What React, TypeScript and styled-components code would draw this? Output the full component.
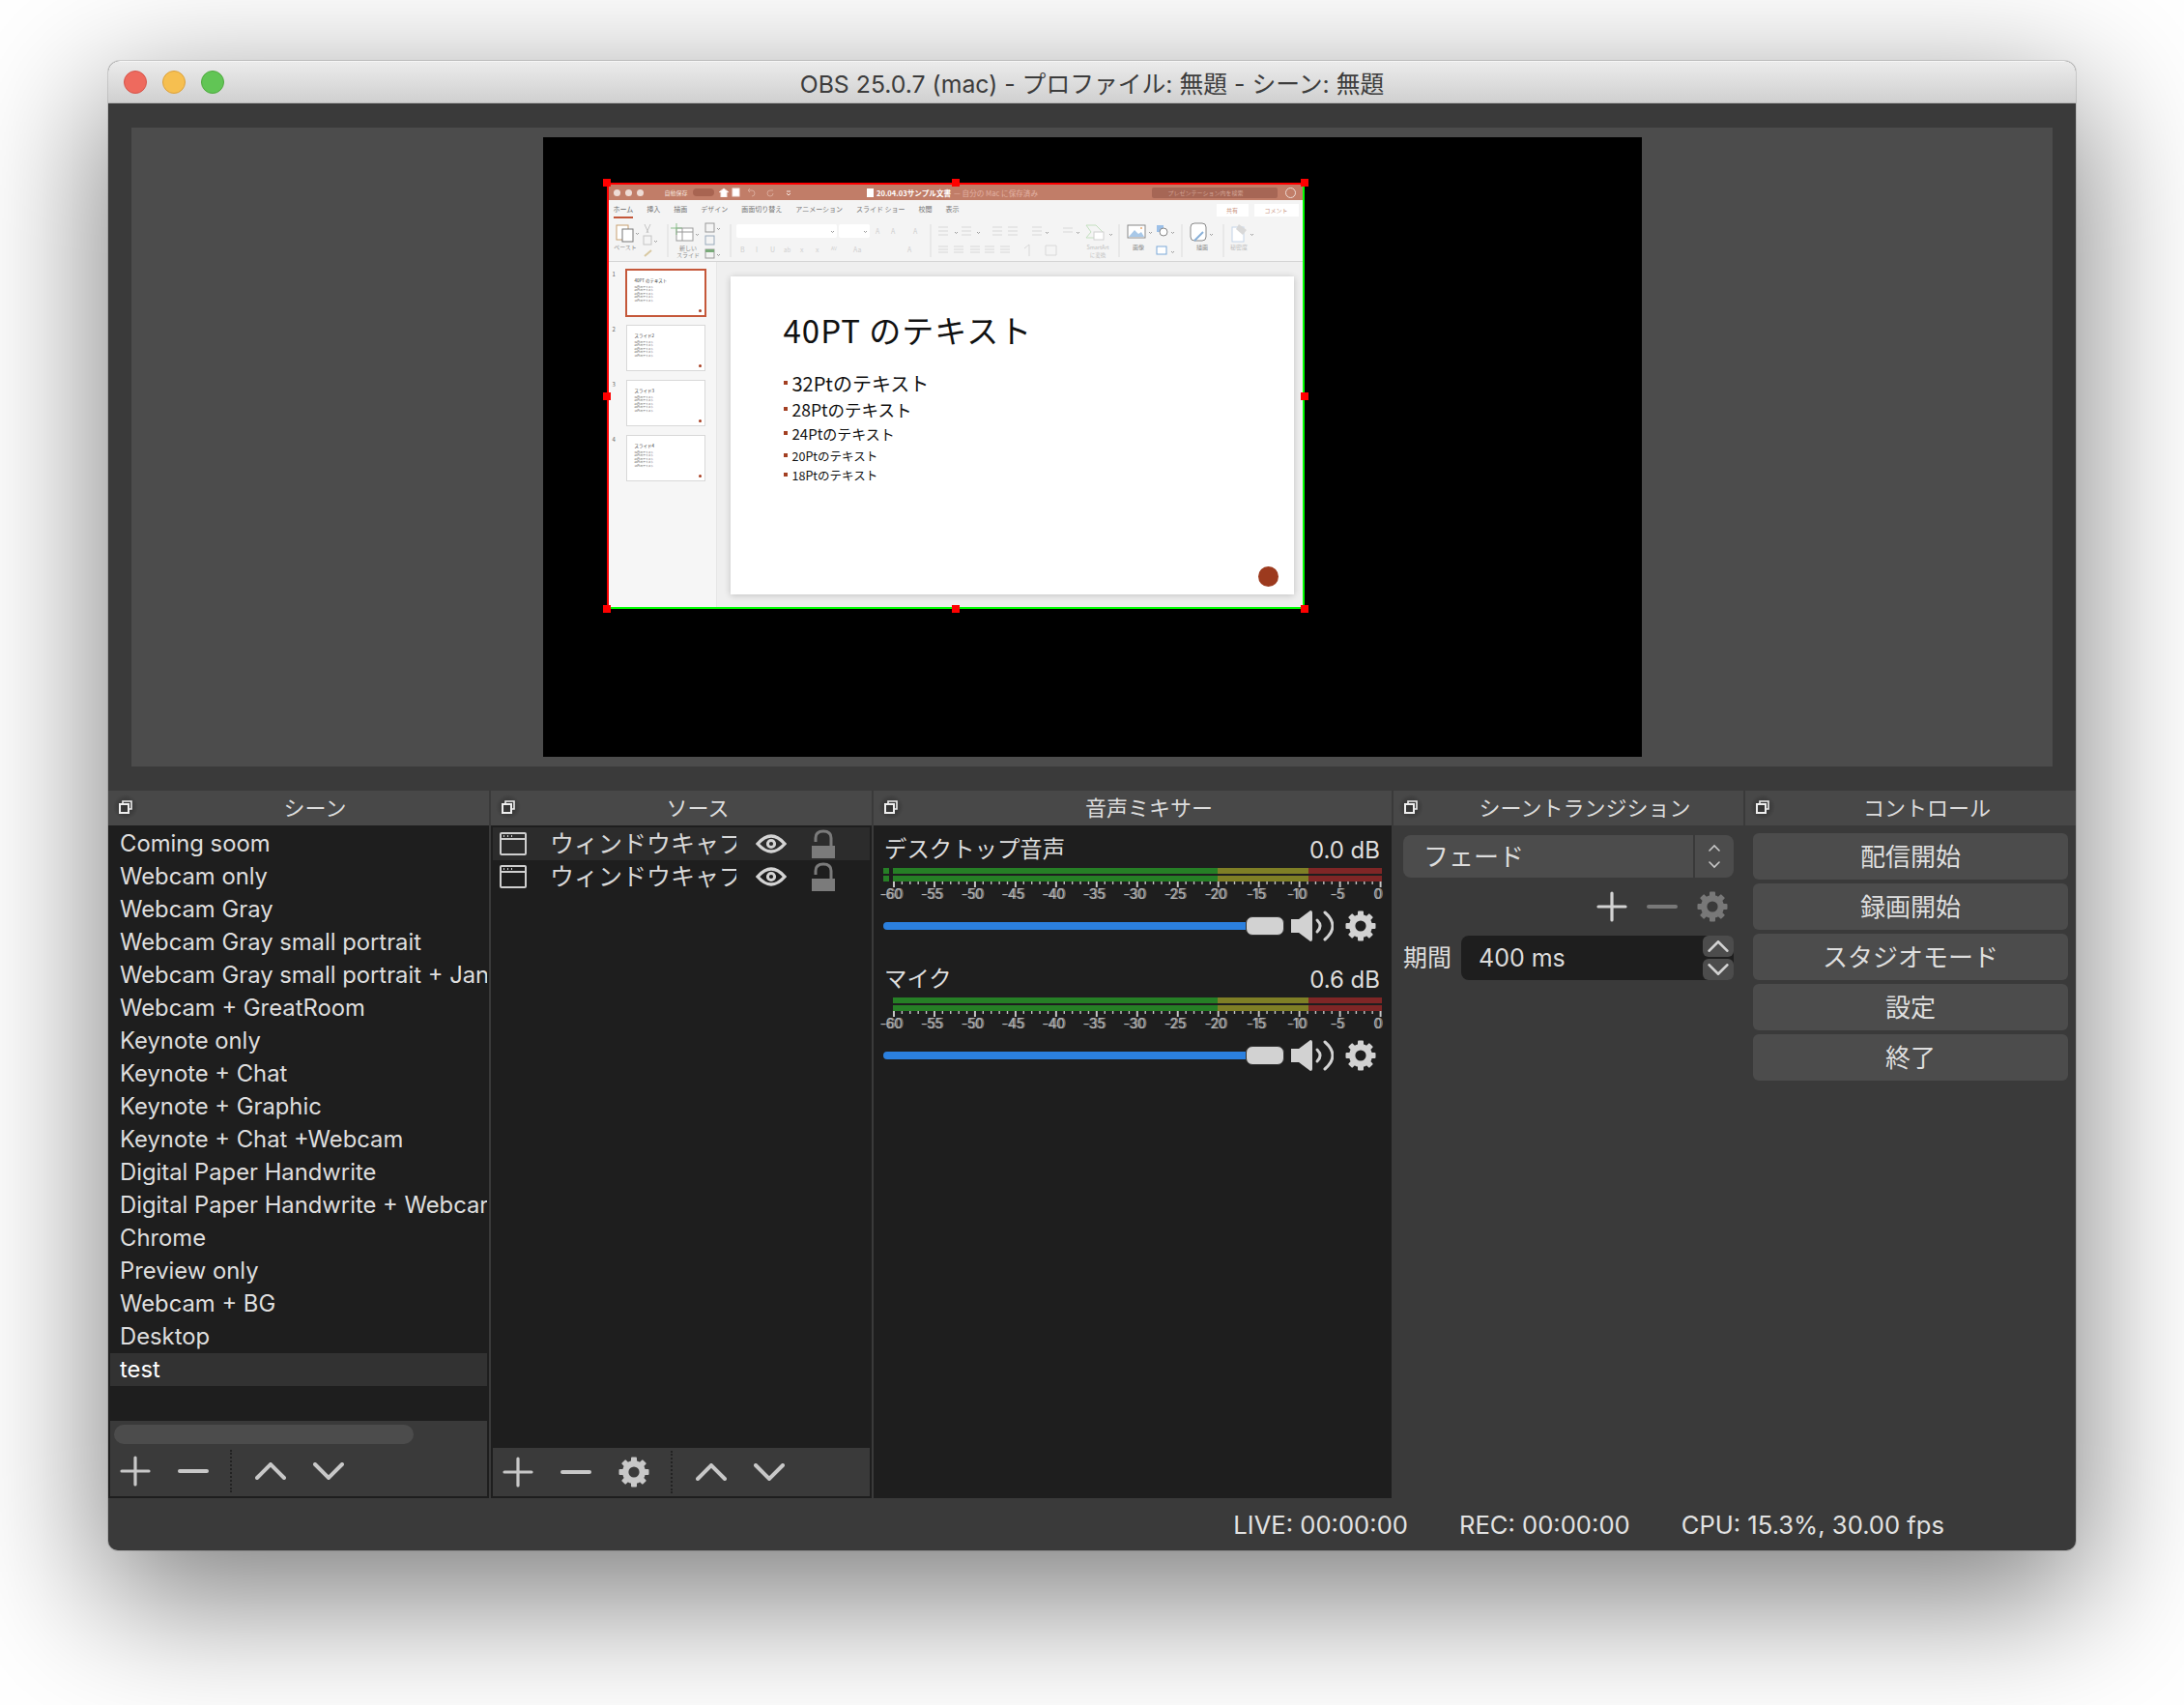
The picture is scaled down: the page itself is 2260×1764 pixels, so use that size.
import React from 'react';
import styled, { createGlobalStyle } from 'styled-components';

const UI_FONT = `Inter, "Noto Sans CJK JP", "Noto Sans", sans-serif`;
const JP_FONT = `"Noto Sans CJK JP", "Noto Sans", sans-serif`;

const scenes = [
  'Coming soom',
  'Webcam only',
  'Webcam Gray',
  'Webcam Gray small portrait',
  'Webcam Gray small portrait + Jan',
  'Webcam + GreatRoom',
  'Keynote only',
  'Keynote + Chat',
  'Keynote + Graphic',
  'Keynote + Chat +Webcam',
  'Digital Paper Handwrite',
  'Digital Paper Handwrite + Webcar',
  'Chrome',
  'Preview only',
  'Webcam + BG',
  'Desktop',
  'test',
];

const bullets = [
  { text: '32Ptのテキスト', size: 20, h: 26 },
  { text: '28Ptのテキスト', size: 17.5, h: 28 },
  { text: '24Ptのテキスト', size: 15, h: 22 },
  { text: '20Ptのテキスト', size: 12.5, h: 24 },
  { text: '18Ptのテキスト', size: 12.5, h: 16 },
];

const thumbs = ['40PT のテキスト', 'スライド2', 'スライド3', 'スライド4'];
const tabs = ['ホーム', '挿入', '描画', 'デザイン', '画面切り替え', 'アニメーション', 'スライド ショー', '校閲', '表示'];
const controls = ['配信開始', '録画開始', 'スタジオモード', '設定', '終了'];
const dbLabels = ['-60', '-55', '-50', '-45', '-40', '-35', '-30', '-25', '-20', '-15', '-10', '-5', '0'];

const Page = createGlobalStyle`
  html, body {
    margin: 0;
    background: #fff;
  }
  body {
    width: 2260px;
    height: 1764px;
    overflow: hidden;
    font-family: ${UI_FONT};
  }
`;

const Desk = styled.div`
  padding: 63px 0 0 112px;
`;

const Window = styled.div`
  width: 2036px;
  height: 1541px;
  display: flex;
  flex-direction: column;
  background: #3a3a3a;
  border-radius: 12px 12px 10px 10px;
  box-shadow: 0 44px 140px 8px rgba(0, 0, 0, 0.5), 0 0 0 1px rgba(0, 0, 0, 0.12);
  overflow: hidden;
`;

const TitleBar = styled.div`
  height: 44px;
  box-sizing: border-box;
  display: grid;
  grid-template-columns: 1fr auto 1fr;
  align-items: center;
  background: linear-gradient(#ebebeb, #d0d0d0);
  border-top: 1px solid #f5f5f5;
  border-bottom: 1px solid #b4b4b4;
`;

const Lights = styled.div`
  display: flex;
  gap: 16px;
  padding-left: 16px;
`;

const Light = styled.span<{ $fill: string; $edge: string }>`
  width: 24px;
  height: 24px;
  box-sizing: border-box;
  border-radius: 50%;
  background: ${(p) => p.$fill};
  border: 1px solid ${(p) => p.$edge};
`;

const WindowTitle = styled.div`
  font-size: 24.8px;
  color: #3c3c3c;
  white-space: nowrap;
`;

const PreviewWrap = styled.div`
  padding: 25px 24px;
`;

const Preview = styled.div`
  height: 661px;
  background: #4c4c4c;
  display: flex;
  justify-content: center;
  align-items: center;
`;

const Stage = styled.div`
  position: relative;
  width: 1137px;
  height: 641px;
  background: #000;
`;

const Capture = styled.div`
  position: absolute;
  left: 66px;
  top: 47px;
  width: 722px;
  height: 441px;
  box-sizing: border-box;
  border-style: solid;
  border-width: 2px;
  border-color: #f00 #0f0 #0f0 #f00;
  display: flex;
  flex-direction: column;
  background: #f4f4f4;
  font-family: ${JP_FONT};
`;

const Handle = styled.span<{ $x: string; $y: string }>`
  position: absolute;
  width: 8px;
  height: 8px;
  background: #f00;
  left: ${(p) => p.$x};
  top: ${(p) => p.$y};
  margin: -4px 0 0 -4px;
`;

const PptTitle = styled.div`
  height: 16px;
  flex: none;
  display: grid;
  grid-template-columns: 1fr auto 1fr;
  align-items: center;
  background: #c17d68;
  color: #fff;
  font-size: 7.6px;
`;

const PptLeft = styled.div`
  display: flex;
  align-items: center;
  padding-left: 5px;
  gap: 5px;
`;

const PptDot = styled.span`
  width: 7px;
  height: 7px;
  border-radius: 50%;
  background: #eedcd6;
`;

const AutoSave = styled.span`
  font-size: 6px;
  margin-left: 17px;
  color: #f3e0da;
  white-space: nowrap;
`;

const Toggle = styled.span`
  width: 22px;
  height: 8px;
  border-radius: 4px;
  background: #a86451;
  margin-right: 0;
`;

const PptName = styled.div`
  display: flex;
  align-items: center;
  gap: 3px;
  white-space: nowrap;
  margin-left: -6px;
`;

const PptFile = styled.span`
  font-weight: 700;
`;

const PptSaved = styled.span`
  color: #e2b2a4;
`;

const PptRight = styled.div`
  display: flex;
  align-items: center;
  justify-content: flex-end;
  padding-right: 7px;
  gap: 8px;
`;

const PptSearch = styled.div`
  width: 130px;
  height: 11px;
  border-radius: 2px;
  background: #a66655;
  color: #d3a597;
  font-size: 6px;
  line-height: 11px;
  padding-left: 17px;
  box-sizing: border-box;
  white-space: nowrap;
`;

const PptSmile = styled.span`
  width: 9px;
  height: 9px;
  border-radius: 50%;
  border: 1px solid #eedcd6;
`;

const TabRow = styled.div`
  height: 20px;
  flex: none;
  display: flex;
  align-items: center;
  gap: 14px;
  padding: 0 4px 0 5px;
  font-size: 7px;
  color: #7c7c7c;
  white-space: nowrap;
`;

const Tab = styled.span<{ $active?: boolean }>`
  height: 18px;
  line-height: 17px;
  box-sizing: border-box;
  color: ${(p) => (p.$active ? '#666' : '#777')};
  border-bottom: ${(p) => (p.$active ? '2px solid #c4573a' : '0')};
`;

const TabSpacer = styled.span`
  flex: 1;
`;

const ShareButton = styled.span<{ $w: number }>`
  width: ${(p) => p.$w}px;
  height: 13px;
  margin-left: -8px;
  background: #fff;
  color: #c9937f;
  font-size: 6px;
  line-height: 13px;
  text-align: center;
`;

const RibbonSvg = styled.svg`
  display: block;
  width: 718px;
  height: 43px;
  flex: none;
  border-bottom: 1px solid #d4d4d4;
  font-family: ${JP_FONT};
`;

const PptBody = styled.div`
  flex: 1;
  min-height: 0;
  display: flex;
`;

const PptSide = styled.div`
  width: 112px;
  flex: none;
  box-sizing: border-box;
  padding: 8px 0 0 4px;
  background: #f6f6f6;
  border-right: 1px solid #e6e6e6;
  display: flex;
  flex-direction: column;
  gap: 9px;
`;

const ThumbRow = styled.div`
  display: flex;
  gap: 10px;
  font-size: 6px;
  color: #666;
`;

const ThumbNo = styled.span`
  width: 4px;
`;

const Thumb = styled.div<{ $active: boolean }>`
  width: ${(p) => (p.$active ? 84 : 82)}px;
  height: ${(p) => (p.$active ? 50 : 48)}px;
  margin: ${(p) => (p.$active ? '-1px' : '0')};
  box-sizing: border-box;
  padding: 7px 0 0 8px;
  background: #fff;
  border: ${(p) => (p.$active ? '2px solid #c5583a' : '1px solid #d8d8d8')};
  color: #333;
  position: relative;
`;

const ThumbHead = styled.div`
  font-size: 4.5px;
  line-height: 6px;
  margin-bottom: 3px;
  white-space: nowrap;
`;

const ThumbLine = styled.div`
  font-size: 2.8px;
  line-height: 3.4px;
  color: #555;
  white-space: nowrap;
`;

const ThumbDot = styled.span`
  position: absolute;
  right: 3px;
  bottom: 3px;
  width: 3px;
  height: 3px;
  border-radius: 50%;
  background: #a93f22;
`;

const PptCanvas = styled.div`
  flex: 1;
  display: flex;
  box-sizing: border-box;
  padding: 15px 9px 13px 14px;
  background: #efefef;
`;

const Slide = styled.div`
  flex: 1;
  position: relative;
  box-sizing: border-box;
  padding: 32px 0 0 55px;
  background: #fff;
  box-shadow: 0 1px 7px rgba(0, 0, 0, 0.2);
  color: #111;
`;

const SlideTitle = styled.div`
  font-size: 33px;
  line-height: 46px;
  letter-spacing: 1px;
  margin-bottom: 19px;
  white-space: nowrap;
`;

const Bullet = styled.div<{ $size: number; $h: number }>`
  height: ${(p) => p.$h}px;
  display: flex;
  align-items: center;
  font-size: ${(p) => p.$size}px;
  white-space: nowrap;
`;

const BulletMark = styled.span`
  width: 4px;
  height: 4px;
  margin-right: 5px;
  background: #a33f22;
`;

const Seal = styled.span`
  position: absolute;
  right: 16px;
  bottom: 8px;
  width: 21px;
  height: 21px;
  border-radius: 50%;
  background: #9c3a1e;
`;

const Docks = styled.div`
  height: 732px;
  flex: none;
  display: grid;
  grid-template-columns: 394px 394px 536px 362px 342px;
  gap: 2px;
`;

const Dock = styled.section<{ $dark?: boolean }>`
  display: flex;
  flex-direction: column;
  min-width: 0;
  background: ${(p) => (p.$dark ? '#1e1e1e' : '#3a3a3a')};
`;

const DockHead = styled.header`
  height: 36px;
  flex: none;
  display: flex;
  align-items: center;
  background: #484848;
  color: #dcdcdc;
  font-size: 22px;
  font-family: ${JP_FONT};
`;

const FloatBtn = styled.span`
  width: 34px;
  height: 36px;
  flex: none;
  box-sizing: border-box;
  padding: 0 0 2px 2px;
  display: flex;
  align-items: center;
  justify-content: center;
  background: radial-gradient(circle at 53% 47%, #333 0, #3c3c3c 8px, #484848 13px);
`;

const DockTitle = styled.span`
  flex: 1;
  text-align: center;
  padding-bottom: 4px;
`;

const ListArea = styled.div`
  flex: 1;
  min-height: 0;
  padding: 2px 2px 0;
  overflow: hidden;
`;

const SceneRow = styled.div<{ $active?: boolean }>`
  height: 34px;
  line-height: 34px;
  padding-left: 10px;
  font-size: 23.8px;
  white-space: nowrap;
  overflow: hidden;
  color: ${(p) => (p.$active ? '#fff' : '#dedede')};
  background: ${(p) => (p.$active ? '#323232' : 'transparent')};
`;

const SourceRow = styled.div<{ $active?: boolean }>`
  height: 34px;
  display: flex;
  align-items: center;
  padding-left: 7px;
  color: #d8d8d8;
  background: ${(p) => (p.$active ? '#2c2c2c' : 'transparent')};
`;

const SourceName = styled.span`
  width: 193px;
  margin-left: 24px;
  padding-bottom: 4px;
  flex: none;
  overflow: hidden;
  white-space: nowrap;
  font-size: 25px;
  font-family: ${JP_FONT};
`;

const EyeSlot = styled.span`
  margin: 0 26px 0 20px;
  display: flex;
`;

const Scrollbar = styled.div`
  height: 24px;
  flex: none;
  box-sizing: border-box;
  margin: 0 2px;
  padding: 4px 0 0 4px;
  background: #3a3a3a;
`;

const ScrollThumb = styled.div`
  width: 310px;
  height: 20px;
  border-radius: 10px;
  background: #4c4c4c;
`;

const Toolbar = styled.div<{ $tall?: boolean }>`
  height: ${(p) => (p.$tall ? 54 : 50)}px;
  flex: none;
  box-sizing: border-box;
  margin: 0 2px 2px;
  padding-top: ${(p) => (p.$tall ? 2 : 0)}px;
  display: flex;
  align-items: center;
  background: #3a3a3a;
  color: #c8c8c8;
`;

const ToolGroup = styled.div`
  display: flex;
  gap: 8px;
`;

const ToolBtn = styled.span`
  width: 52px;
  display: flex;
  justify-content: center;
  align-items: center;
`;

const ToolSep = styled.span`
  width: 1px;
  height: 44px;
  margin: 0 13px 0 12px;
  border-left: 2px dotted #222;
`;

const Strip = styled.div`
  height: 134px;
  flex: none;
  box-sizing: border-box;
  padding: 10px 10px 0;
  color: #dedede;
`;

const StripHead = styled.div`
  height: 30px;
  display: flex;
  align-items: center;
  justify-content: space-between;
  font-size: 24px;
  padding: 0 2px 0 1px;
`;

const StripName = styled.span`
  font-size: 23.4px;
  font-family: ${JP_FONT};
  padding-bottom: 4px;
`;

const MeterStack = styled.div`
  margin-top: 4px;
  display: flex;
  flex-direction: column;
  gap: 2px;
`;

const MeterBar = styled.div<{ $lead: boolean }>`
  height: 6px;
  display: flex;
  padding-left: ${(p) => (p.$lead ? 0 : 10)}px;
`;

const MeterSeg = styled.span<{ $w: number; $c: string; $gap?: number }>`
  width: ${(p) => p.$w}px;
  margin-right: ${(p) => p.$gap ?? 0}px;
  background: ${(p) => p.$c};
`;

const TickSvg = styled.svg`
  display: block;
  width: 516px;
  height: 6px;
`;

const TickLabels = styled.div`
  display: flex;
  margin-left: -13px;
  height: 14px;
`;

const TickLabel = styled.span`
  width: 41.97px;
  flex: none;
  text-align: center;
  font-size: 14px;
  line-height: 14px;
  letter-spacing: -0.3px;
  color: #b4b4b4;
  text-shadow: 1.5px 0 0 rgba(160, 160, 160, 0.75);
`;

const SliderRow = styled.div`
  height: 32px;
  margin-top: 10px;
  display: flex;
  align-items: center;
  color: #d2d2d2;
`;

const Track = styled.div`
  width: 375px;
  height: 8px;
  flex: none;
  border-radius: 4px 0 0 4px;
  background: #2b80df;
`;

const Knob = styled.div`
  width: 40px;
  height: 20px;
  flex: none;
  box-sizing: border-box;
  border: 1px solid #333;
  border-radius: 7px;
  background: #d2d2d2;
  margin-right: 7px;
`;

const SliderGear = styled.span`
  margin-left: 12px;
  display: flex;
`;

const Pane = styled.div`
  padding: 10px 10px 0;
  color: #dcdcdc;
`;

const Combo = styled.div`
  height: 44px;
  display: flex;
  align-items: center;
  background: #4c4c4c;
  border-radius: 8px;
  font-size: 26px;
  font-family: ${JP_FONT};
`;

const ComboText = styled.span`
  flex: 1;
  padding: 0 0 4px 21px;
`;

const ComboArrows = styled.span`
  width: 40px;
  height: 44px;
  flex: none;
  display: flex;
  align-items: center;
  justify-content: center;
  border-left: 2px solid #3a3a3a;
`;

const TransTools = styled.div`
  height: 36px;
  margin-top: 12px;
  display: flex;
  justify-content: flex-end;
  align-items: center;
  gap: 20px;
  padding-right: 6px;
`;

const ToolGlyph = styled.span<{ $dim?: boolean }>`
  display: flex;
  color: ${(p) => (p.$dim ? '#787878' : '#d2d2d2')};
`;

const DurationRow = styled.div`
  height: 46px;
  margin-top: 12px;
  display: flex;
  align-items: center;
`;

const DurationLabel = styled.span`
  width: 60px;
  flex: none;
  padding-bottom: 4px;
  font-size: 25px;
  font-family: ${JP_FONT};
  white-space: nowrap;
`;

const DurationBox = styled.div`
  flex: 1;
  height: 46px;
  position: relative;
  box-sizing: border-box;
  padding-left: 18px;
  line-height: 46px;
  font-size: 25px;
  background: #1e1e1e;
  border-radius: 8px;
`;

const Spin = styled.div`
  position: absolute;
  right: 0;
  top: 0;
  width: 32px;
  display: flex;
  flex-direction: column;
  gap: 2px;
`;

const SpinBtn = styled.span`
  height: 22px;
  display: flex;
  align-items: center;
  justify-content: center;
  background: #4c4c4c;
  border-radius: 6px;
  color: #d2d2d2;
`;

const ControlStack = styled.div`
  padding: 8px 8px 0;
  display: flex;
  flex-direction: column;
  gap: 4px;
`;

const ControlButton = styled.button`
  height: 48px;
  padding: 0 0 4px;
  border: 0;
  border-radius: 6px;
  background: #4c4c4c;
  color: #dedede;
  font-size: 26px;
  font-family: ${JP_FONT};
`;

const StatusBar = styled.footer`
  height: 54px;
  flex: none;
  box-sizing: border-box;
  padding: 1px 136px 0 0;
  display: flex;
  justify-content: flex-end;
  align-items: center;
  gap: 53px;
  color: #e2e2e2;
  font-size: 25.6px;
`;

const FloatIcon = () => (
  <svg width="14" height="14" viewBox="0 0 14 14" fill="none" stroke="#eee" strokeWidth="2">
    <path d="M4 3V1h9v8h-3" strokeWidth="1.6" />
    <rect x="1" y="4" width="9" height="9" />
  </svg>
);

const Plus = ({ size = 32 }: { size?: number }) => (
  <svg width={size} height={size} viewBox="0 0 32 32" stroke="currentColor" strokeWidth="3.2" strokeLinecap="round">
    <path d="M16 2v28M2 16h28" />
  </svg>
);

const Minus = () => (
  <svg width="32" height="32" viewBox="0 0 32 32" stroke="currentColor" strokeWidth="4" strokeLinecap="round">
    <path d="M2 16h28" />
  </svg>
);

const Chevron = ({ up, w = 32, h = 18, sw = 4 }: { up?: boolean; w?: number; h?: number; sw?: number }) => (
  <svg width={w} height={h} viewBox="0 0 32 18" fill="none" stroke="currentColor" strokeWidth={sw} strokeLinecap="round">
    <path d={up ? 'M2 16 16 2l14 14' : 'M2 2l14 14L30 2'} />
  </svg>
);

const teeth = [0, 45, 90, 135, 180, 225, 270, 315];

const Gear = ({ size = 32 }: { size?: number }) => (
  <svg width={size} height={size} viewBox="0 0 32 32" fill="currentColor">
    <circle cx="16" cy="16" r="8.8" fill="none" stroke="currentColor" strokeWidth="6.4" />
    {teeth.map((a) => (
      <rect key={a} x="13" y="0.5" width="6" height="6" rx="1" transform={`rotate(${a} 16 16)`} />
    ))}
  </svg>
);

const Speaker = () => (
  <svg width="44" height="32" viewBox="0 0 44 32" fill="none" stroke="currentColor">
    <path d="M0 9h8L20 0q2 0 2 2v28q0 2-2 2L8 23H0Z" fill="currentColor" stroke="none" />
    <path d="M27 10q6 6 0 12" strokeWidth="3" strokeLinecap="round" />
    <path d="M35 2q16 14 0 28" strokeWidth="3" strokeLinecap="round" />
  </svg>
);

const WindowIcon = () => (
  <svg width="28" height="24" viewBox="0 0 28 24" fill="none" stroke="#cfcfcf" strokeWidth="2">
    <rect x="1" y="1" width="26" height="22" rx="1" />
    <path d="M1 7h26" />
    <path d="M4 4h1M8 4h1M12 4h1" strokeWidth="2" />
  </svg>
);

const Eye = () => (
  <svg width="32" height="20" viewBox="0 0 32 20" fill="none" stroke="#d4d4d4">
    <path d="M2 10Q16-6 30 10 16 26 2 10Z" strokeWidth="3.4" />
    <circle cx="16" cy="10" r="3.6" strokeWidth="3" />
  </svg>
);

const Lock = () => (
  <svg width="24" height="30" viewBox="0 0 24 30" fill="none">
    <rect y="17" width="24" height="13" fill="#7b7b7b" />
    <path d="M4 13V9q0-7 8-7t8 7v9" stroke="#7b7b7b" strokeWidth="3" />
  </svg>
);

const Updown = () => (
  <svg width="14" height="26" viewBox="0 0 14 26" fill="none" stroke="#c8c8c8" strokeWidth="1.6" strokeLinecap="round">
    <path d="M2 7l5-5 5 5M2 19l5 5 5-5" />
  </svg>
);

const Ticks = () => {
  const lines = [];
  for (let i = 0; i <= 60; i++) {
    const major = i % 5 === 0;
    const x = 11 + i * 8.393;
    lines.push(<line key={i} x1={x} x2={x} y1="0" y2={major ? 6 : 3} strokeWidth={major ? 2 : 1.4} />);
  }
  return (
    <TickSvg viewBox="0 0 516 6" stroke="#c4c4c4">
      {lines}
    </TickSvg>
  );
};

const mutedText = { fill: '#8c8c8c', fontSize: 6 };

// the greyed-out PowerPoint ribbon inside the captured window
const Ribbon = () => (
  <RibbonSvg viewBox="0 0 718 43">
    <g stroke="#dcdcdc" strokeWidth="1">
      <path d="M61 5v34M126 5v34M333 5v34M528 5v34M593 5v34M636 5v34" />
    </g>
    <rect x="132" y="5" width="104" height="14" rx="2" fill="#fff" />
    <rect x="238" y="5" width="32" height="14" rx="2" fill="#fff" />
    <rect x="8" y="6" width="12" height="15" fill="#fff" stroke="#c8a070" />
    <rect x="14" y="10" width="11" height="13" fill="#fff" stroke="#777" />
    <g fill="none" stroke="#c4c4c4">
      <path d="M37 5l4 9M43 5l-4 9" />
      <rect x="36" y="17" width="8" height="9" />
      <path d="M37 38l7-6" strokeWidth="2" stroke="#d8c8a0" />
      <rect x="100" y="4" width="9" height="9" stroke="#999" />
      <rect x="100" y="17" width="9" height="9" stroke="#9ab" />
      <rect x="100" y="31" width="9" height="9" stroke="#999" />
    </g>
    <rect x="100" y="31" width="9" height="3" fill="#7aaa7a" />
    <rect x="70" y="9" width="17" height="13" fill="#fff" stroke="#999" />
    <path d="M70 4v12M64 9h12" stroke="#8ac08a" />
    <path d="M76 9v13M70 13h17" stroke="#999" />
    <text x="17" y="31" textAnchor="middle" {...mutedText}>ペースト</text>
    <text x="82" y="32" textAnchor="middle" {...mutedText}>新しい</text>
    <text x="82" y="39" textAnchor="middle" {...mutedText}>スライド</text>
    <g fill="#cfcfcf" fontSize="7">
      <text x="136" y="34">B</text>
      <text x="152" y="34">I</text>
      <text x="167" y="34">U</text>
      <text x="181" y="34" fontSize="6">ab</text>
      <text x="198" y="34">x</text>
      <text x="214" y="34">x</text>
      <text x="230" y="32" fontSize="5">AV</text>
      <text x="253" y="34">Aa</text>
      <text x="309" y="34">A</text>
      <text x="276" y="15">A</text>
      <text x="292" y="15">A</text>
      <text x="315" y="15">A</text>
    </g>
    <g stroke="#d8d8d8" fill="none">
      <path d="M341 8h10M341 12h10M341 16h10M365 8h10M365 12h10M365 16h10M397 8h10M397 12h10M397 16h10M413 8h10M413 12h10M413 16h10M438 8h10M438 12h10M438 16h10M470 9h10M470 13h10" />
      <path d="M341 28h10M341 31h10M341 34h10M357 28h10M357 31h10M357 34h10M374 28h10M374 31h10M374 34h10M389 28h10M389 31h10M389 34h10M405 28h10M405 31h10M405 34h10" />
      <path d="M435 26v12M430 30l5-4M452 27h11v10h-11z" />
      <path d="M494 6h10l8 8-8 5h-10l5-6z" stroke="#c4e0c0" />
      <rect x="502" y="13" width="10" height="8" stroke="#d0d0d0" fill="#fff" />
    </g>
    <text x="506" y="31" textAnchor="middle" fill="#c0c0c0" fontSize="5.5">SmartArt</text>
    <text x="506" y="39" textAnchor="middle" fill="#c0c0c0" fontSize="5.5">に変換</text>
    <rect x="537" y="6" width="18" height="13" fill="#fff" stroke="#888" />
    <path d="M538 18l6-7 4 4 3-2 3 5z" fill="#a8c8e8" />
    <circle cx="551" cy="9" r="1" fill="#e8a870" />
    <text x="548" y="31" textAnchor="middle" {...mutedText}>画像</text>
    <rect x="567" y="6" width="7" height="7" fill="#9cc0e8" />
    <circle cx="574" cy="13" r="4" fill="#fff" stroke="#888" />
    <rect x="567" y="28" width="10" height="8" fill="#fff" stroke="#7aa8d8" />
    <rect x="602" y="4" width="16" height="18" rx="4" fill="#fff" stroke="#888" />
    <path d="M606 22l9-9" stroke="#8ab0d8" strokeWidth="2" />
    <text x="614" y="31" textAnchor="middle" {...mutedText}>描画</text>
    <rect x="645" y="8" width="12" height="15" fill="#fff" stroke="#c4d4e8" />
    <path d="M652 5l8 6-4 5-7-6z" fill="#d8d8d8" />
    <text x="652" y="31" textAnchor="middle" fill="#c0c0c0" fontSize="6">秘密度</text>
    <g stroke="#888" fill="none" strokeWidth="0.8">
      <path d="M28 14l1.500 1.500 1.500-1.500M47 22l1.500 1.500 1.500-1.500M90 15l1.500 1.500 1.500-1.500M112 9l1.500 1.500 1.500-1.500M112 36l1.500 1.500 1.500-1.500M230 12l1.500 1.500 1.500-1.500M264 12l1.500 1.500 1.500-1.500M358 13l1.500 1.500 1.500-1.500M381 13l1.500 1.500 1.500-1.500M452 13l1.500 1.500 1.500-1.500M484 13l1.500 1.500 1.500-1.500M518 15l1.500 1.500 1.500-1.500M559 13l1.500 1.500 1.500-1.500M582 13l1.500 1.500 1.500-1.500M582 33l1.500 1.500 1.500-1.500M622 15l1.500 1.500 1.500-1.500M664 15l1.500 1.500 1.500-1.500" />
    </g>
  </RibbonSvg>
);

const PptWindow = () => (
  <>
    <PptTitle>
      <PptLeft>
        <PptDot />
        <PptDot />
        <PptDot />
        <AutoSave>自動保存</AutoSave>
        <Toggle />
        <svg width="76" height="10" viewBox="0 0 76 10" fill="none" stroke="#f5e8e3">
          <path d="M0 5 5 1l5 4M2 5v5h6V5" fill="#fff" />
          <rect x="14" y="1" width="7" height="8" fill="#fff" />
          <path d="M30 3h4q3 0 3 3t-3 3M30 3l2-2M30 3l2 2" stroke="#d9a999" />
          <path d="M56 3h-3q-3 0-3 3t3 3 3-3" stroke="#d9a999" />
          <path d="M74 4h-4M74 6l-2 2-2-2" />
        </svg>
      </PptLeft>
      <PptName>
        <svg width="7" height="9" viewBox="0 0 7 9">
          <rect width="7" height="9" fill="#fff" />
        </svg>
        <PptFile>20.04.03サンプル文書</PptFile>
        <PptSaved>— 自分の Mac に保存済み</PptSaved>
      </PptName>
      <PptRight>
        <PptSearch>プレゼンテーション内を検索</PptSearch>
        <PptSmile />
      </PptRight>
    </PptTitle>
    <TabRow>
      {tabs.map((t, i) => (
        <Tab key={t} $active={i === 0}>
          {t}
        </Tab>
      ))}
      <TabSpacer />
      <ShareButton $w={33}>共有</ShareButton>
      <ShareButton $w={46}>コメント</ShareButton>
    </TabRow>
    <Ribbon />
    <PptBody>
      <PptSide>
        {thumbs.map((t, i) => (
          <ThumbRow key={t}>
            <ThumbNo>{i + 1}</ThumbNo>
            <Thumb $active={i === 0}>
              <ThumbHead>{t}</ThumbHead>
              {bullets.map((b) => (
                <ThumbLine key={b.text}>{b.text}</ThumbLine>
              ))}
              <ThumbDot />
            </Thumb>
          </ThumbRow>
        ))}
      </PptSide>
      <PptCanvas>
        <Slide>
          <SlideTitle>40PT のテキスト</SlideTitle>
          {bullets.map((b) => (
            <Bullet key={b.text} $size={b.size} $h={b.h}>
              <BulletMark />
              {b.text}
            </Bullet>
          ))}
          <Seal />
        </Slide>
      </PptCanvas>
    </PptBody>
    <Handle $x="-2px" $y="-2px" />
    <Handle $x="50%" $y="-2px" />
    <Handle $x="calc(100% + 2px)" $y="-2px" />
    <Handle $x="-2px" $y="50%" />
    <Handle $x="calc(100% + 2px)" $y="50%" />
    <Handle $x="-2px" $y="calc(100% + 2px)" />
    <Handle $x="50%" $y="calc(100% + 2px)" />
    <Handle $x="calc(100% + 2px)" $y="calc(100% + 2px)" />
  </>
);

const DockHeader = ({ title }: { title: string }) => (
  <DockHead>
    <FloatBtn>
      <FloatIcon />
    </FloatBtn>
    <DockTitle>{title}</DockTitle>
  </DockHead>
);

const MixerStrip = ({ name, db, lead }: { name: string; db: string; lead?: boolean }) => (
  <Strip>
    <StripHead>
      <StripName>{name}</StripName>
      <span>{db}</span>
    </StripHead>
    <MeterStack>
      {[0, 1].map((n) => (
        <MeterBar key={n} $lead={!!lead}>
          {lead && <MeterSeg $w={6} $c="#267f26" $gap={4} />}
          <MeterSeg $w={336} $c="#267f26" />
          <MeterSeg $w={94} $c="#7f7f26" />
          <MeterSeg $w={76} $c="#7f2626" />
        </MeterBar>
      ))}
    </MeterStack>
    <Ticks />
    <TickLabels>
      {dbLabels.map((l) => (
        <TickLabel key={l}>{l}</TickLabel>
      ))}
    </TickLabels>
    <SliderRow>
      <Track />
      <Knob />
      <Speaker />
      <SliderGear>
        <Gear />
      </SliderGear>
    </SliderRow>
  </Strip>
);

const App: React.FC = () => (
  <>
    <Page />
    <Desk>
      <Window>
        <TitleBar>
          <Lights>
            <Light $fill="#ee6a5e" $edge="#d5544a" />
            <Light $fill="#f6bf50" $edge="#dba13d" />
            <Light $fill="#61c555" $edge="#4fa93f" />
          </Lights>
          <WindowTitle>OBS 25.0.7 (mac) - プロファイル: 無題 - シーン: 無題</WindowTitle>
        </TitleBar>
        <PreviewWrap>
          <Preview>
            <Stage>
              <Capture>
                <PptWindow />
              </Capture>
            </Stage>
          </Preview>
        </PreviewWrap>
        <Docks>
          <Dock $dark>
            <DockHeader title="シーン" />
            <ListArea>
              {scenes.map((s) => (
                <SceneRow key={s} $active={s === 'test'}>
                  {s}
                </SceneRow>
              ))}
            </ListArea>
            <Scrollbar>
              <ScrollThumb />
            </Scrollbar>
            <Toolbar $tall>
              <ToolGroup>
                <ToolBtn>
                  <Plus />
                </ToolBtn>
                <ToolBtn>
                  <Minus />
                </ToolBtn>
              </ToolGroup>
              <ToolSep />
              <ToolGroup>
                <ToolBtn>
                  <Chevron up />
                </ToolBtn>
                <ToolBtn>
                  <Chevron />
                </ToolBtn>
              </ToolGroup>
            </Toolbar>
          </Dock>
          <Dock $dark>
            <DockHeader title="ソース" />
            <ListArea>
              {[0, 1].map((n) => (
                <SourceRow key={n} $active={n === 0}>
                  <WindowIcon />
                  <SourceName>ウィンドウキャプチャ</SourceName>
                  <EyeSlot>
                    <Eye />
                  </EyeSlot>
                  <Lock />
                </SourceRow>
              ))}
            </ListArea>
            <Toolbar>
              <ToolGroup>
                <ToolBtn>
                  <Plus />
                </ToolBtn>
                <ToolBtn>
                  <Minus />
                </ToolBtn>
                <ToolBtn>
                  <Gear />
                </ToolBtn>
              </ToolGroup>
              <ToolSep />
              <ToolGroup>
                <ToolBtn>
                  <Chevron up />
                </ToolBtn>
                <ToolBtn>
                  <Chevron />
                </ToolBtn>
              </ToolGroup>
            </Toolbar>
          </Dock>
          <Dock $dark>
            <DockHeader title="音声ミキサー" />
            <MixerStrip name="デスクトップ音声" db="0.0 dB" lead />
            <MixerStrip name="マイク" db="0.6 dB" />
          </Dock>
          <Dock>
            <DockHeader title="シーントランジション" />
            <Pane>
              <Combo>
                <ComboText>フェード</ComboText>
                <ComboArrows>
                  <Updown />
                </ComboArrows>
              </Combo>
              <TransTools>
                <ToolGlyph>
                  <Plus />
                </ToolGlyph>
                <ToolGlyph $dim>
                  <Minus />
                </ToolGlyph>
                <ToolGlyph $dim>
                  <Gear />
                </ToolGlyph>
              </TransTools>
              <DurationRow>
                <DurationLabel>期間</DurationLabel>
                <DurationBox>
                  400 ms
                  <Spin>
                    <SpinBtn>
                      <Chevron up w={22} h={12} sw={4} />
                    </SpinBtn>
                    <SpinBtn>
                      <Chevron w={22} h={12} sw={4} />
                    </SpinBtn>
                  </Spin>
                </DurationBox>
              </DurationRow>
            </Pane>
          </Dock>
          <Dock>
            <DockHeader title="コントロール" />
            <ControlStack>
              {controls.map((c) => (
                <ControlButton key={c}>{c}</ControlButton>
              ))}
            </ControlStack>
          </Dock>
        </Docks>
        <StatusBar>
          <span>LIVE: 00:00:00</span>
          <span>REC: 00:00:00</span>
          <span>CPU: 15.3%, 30.00 fps</span>
        </StatusBar>
      </Window>
    </Desk>
  </>
);

export default App;
